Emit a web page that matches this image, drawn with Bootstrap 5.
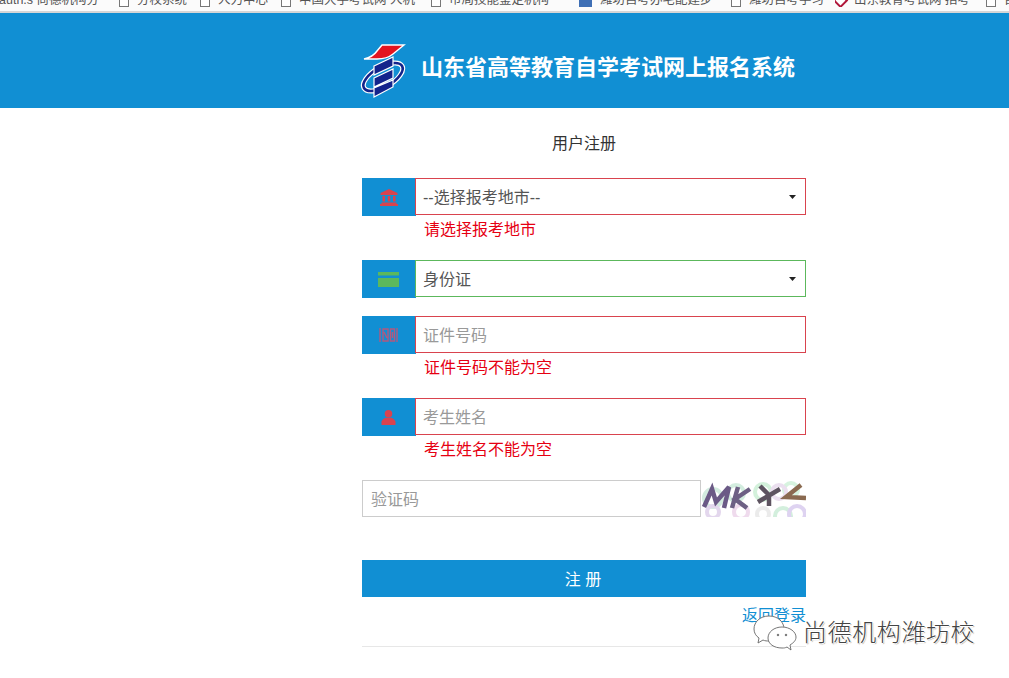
<!DOCTYPE html>
<html lang="zh">
<head>
<meta charset="utf-8">
<title>用户注册</title>
<link href="https://cdn.jsdelivr.net/npm/bootstrap@5.3.0/dist/css/bootstrap.min.css" rel="stylesheet">
<style>
html,body{height:678px;overflow:hidden}
body{font-family:"Liberation Sans","Noto Sans CJK SC",sans-serif;color:#333;background:#fff;font-size:14px}
.tabs-strip{height:13px;overflow:hidden;background:#fbfbfb;border-bottom:2px solid #d6d6d6;font-size:12.5px;line-height:14px;color:#555;white-space:nowrap}
.tab-item{display:flex;align-items:center;gap:8px;flex:none;height:14px;margin-top:-7px;overflow:hidden;width:81px}
.tab-item:nth-child(1){width:120px;margin-left:-1px}
.tab-item:nth-child(4){width:150px}
.tab-item:nth-child(5){width:148px}
.tab-item:nth-child(6){width:152px}
.tab-item:nth-child(7){width:104px}
.tab-item:nth-child(8){width:151px}
.tab-box{display:block;width:10px;height:14px;border:1px solid #777;background:#fff;flex:none}
.tab-fav{background:#3f6fb5;border-color:#3f6fb5;width:13px}
.tab-mark{width:11px;height:11px;background:#fff;border:2px solid #b0173a;transform:rotate(45deg);flex:none;display:block}
.brand-bar{height:95px;background:#118fd3}
.brand-inner{width:446px;margin-left:360px;height:95px;padding-top:29px}
.brand-logo{flex:none}
.brand-title{font-size:22px;font-weight:700;color:#fff;margin-left:15px;line-height:52px;white-space:nowrap}
.reg-form{width:444px;margin-left:362px}
.reg-heading{font-size:16px;line-height:20px;margin-top:26px;margin-bottom:24px;color:#333}
.addon-cell{width:54px;height:38px;background:#118fd3;border:0;border-radius:0;flex:none;display:flex;align-items:center;justify-content:center;padding-right:1px}
.reg-field.form-control,.reg-field.form-select{height:37px;border-radius:0;font-size:16px;padding:2px 8px 0 7px;color:#555;box-shadow:none}
.reg-field::placeholder{color:#999}
.reg-field.bad-state{border:1px solid #d9434e}
.reg-field.good-state{border:1px solid #5cb85c}
.reg-field.form-select{background-image:url("data:image/svg+xml,%3Csvg xmlns='http://www.w3.org/2000/svg' width='7' height='4'%3E%3Cpath d='M0 0H7L3.500 4Z' fill='%23222'/%3E%3C/svg%3E");background-size:7px 4px;background-position:right 9px top 16px;background-repeat:no-repeat}
.err-line{color:#e60012;font-size:16px;line-height:22px;margin:3px 0 19px 62px;height:22px}
.row-gap{margin-bottom:18px}
.code-input.form-control{width:339px;height:37px;border:1px solid #ccc;border-radius:0;font-size:16px;padding:2px 8px 0;flex:none}
.code-input::placeholder{color:#999}
.captcha-pic{width:105px;height:37px;flex:none}
.submit-btn.btn{height:37px;border-radius:0;background:#118fd3;border:0;color:#fff;font-size:16px;margin-top:43px;width:100%;padding:2px 2px 0 0}
.back-link{color:#118fd3;text-decoration:none;font-size:16px;line-height:22px;margin-top:8px}
.end-rule{border-top:1px solid #e7e7e7;margin-top:19px}
.wm-layer{position:absolute;left:753px;top:613px;gap:6px;pointer-events:none}
.wm-text{font-size:24px;line-height:40px;color:#444;text-shadow:1px 0 #fff,-1px 0 #fff,0 1px #fff,0 -1px #fff,1px 1px 1px #999;letter-spacing:.6px;font-weight:300}
</style>
</head>
<body>
<div class="tabs-strip d-flex">
 <span class="tab-item">auth.s 尚德机构分</span>
 <span class="tab-item"><i class="tab-box"></i>分校系统</span>
 <span class="tab-item"><i class="tab-box"></i>人力中心</span>
 <span class="tab-item"><i class="tab-box"></i>中国大学考试网 人机</span>
 <span class="tab-item"><i class="tab-box"></i>市局技能鉴定机构</span>
 <span class="tab-item"><i class="tab-box tab-fav"></i>潍坊自考办宅配建步</span>
 <span class="tab-item"><i class="tab-box"></i>潍坊自考学习</span>
 <span class="tab-item"><i class="tab-mark"></i>山东教育考试网 招考</span>
 <span class="tab-item"><i class="tab-box"></i>自考</span>
</div>
<header class="brand-bar">
 <div class="brand-inner d-flex align-items-start">
  <svg width="46" height="56" viewBox="0 0 46 56" class="brand-logo">
   <path d="M22 3 H44 L33 12 Q27 17 17 17 H4 Q13 15 17 9Z" fill="#e3141f" stroke="#fff" stroke-width="1.400"/>
   <ellipse cx="23" cy="35" rx="22" ry="10" transform="rotate(-30 23 35)" fill="none" stroke="#fff" stroke-width="5"/>
   <ellipse cx="23" cy="35" rx="22" ry="10" transform="rotate(-30 23 35)" fill="none" stroke="#13248c" stroke-width="2.600"/>
   <path d="M14 24 L33 15 V24 L14 33Z M14 36 L33 27 V36 L14 45Z M14 46 L33 38 V45 L14 55Z" fill="#13248c" stroke="#fff" stroke-width="1.200"/>
  </svg>
  <div class="brand-title">山东省高等教育自学考试网上报名系统</div>
 </div>
</header>
<main class="reg-form">
 <div class="reg-heading text-center">用户注册</div>
 <div class="input-group flex-nowrap">
  <span class="addon-cell"><svg width="18" height="17" viewBox="0 0 18 17"><path d="M9 0 L17.500 4 V6 H.5 V4Z M2.500 7H5V12.500H2.500Z M7.700 7H10.300V12.500H7.700Z M13 7H15.500V12.500H13Z M1.500 13.500H16.500V15H18V17H0V15H1.500Z" fill="#d9434e"/></svg></span>
  <select class="form-select reg-field bad-state"><option>--选择报考地市--</option></select>
 </div>
 <div class="err-line">请选择报考地市</div>
 <div class="input-group flex-nowrap row-gap">
  <span class="addon-cell"><svg width="21" height="15" viewBox="0 0 21 15"><path d="M0 0H21V3.500H0Z M0 6H21V15H0Z" fill="#5cb85c"/></svg></span>
  <select class="form-select reg-field good-state"><option>身份证</option></select>
 </div>
 <div class="input-group flex-nowrap">
  <span class="addon-cell"><svg width="19" height="14" viewBox="0 0 19 14" fill="none" stroke="#b2597f" stroke-width="1.400"><path d="M1 0V14 M4 1H9V13H4Z M11.500 1H15.500V13H11.500Z M18 0V14 M5 4L8 10 M13.500 4V10"/></svg></span>
  <input class="form-control reg-field bad-state" placeholder="证件号码">
 </div>
 <div class="err-line">证件号码不能为空</div>
 <div class="input-group flex-nowrap">
  <span class="addon-cell"><svg width="15" height="15" viewBox="0 0 15 15"><circle cx="7.500" cy="3.800" r="3.800" fill="#d9434e"/><path d="M4.500 7.800 H10.500 Q13.500 9 14.500 11.500 V15 H.5 V11.500 Q1.500 9 4.500 7.800Z" fill="#d9434e"/></svg></span>
  <input class="form-control reg-field bad-state" placeholder="考生姓名">
 </div>
 <div class="err-line">考生姓名不能为空</div>
 <div class="d-flex">
  <input class="form-control code-input" placeholder="验证码">
  <svg class="captcha-pic" viewBox="0 0 105 37">
   <g fill="none" stroke-width="4" opacity=".5">
    <circle cx="12" cy="18" r="9" stroke="#a9d8c0"/><circle cx="35" cy="13" r="8" stroke="#a9dcc0"/><circle cx="12" cy="32" r="6" stroke="#c9b0dc"/>
    <circle cx="40" cy="32" r="7" stroke="#e0b8dd"/><circle cx="62" cy="34" r="6" stroke="#d9d9d9"/><circle cx="62" cy="12" r="8" stroke="#a8e4b8"/>
    <circle cx="82" cy="36" r="8" stroke="#a8e0bc"/><circle cx="96" cy="34" r="8" stroke="#bfa8e4"/><circle cx="90" cy="10" r="7" stroke="#b0e8c0"/><circle cx="78" cy="12" r="7" stroke="#d8c0e0"/>
   </g>
   <g fill="none" stroke-width="4.500">
    <path d="M3 27L11 9L15 22L28 7L23 28" stroke="#6b5a86"/>
    <path d="M37 7L31 28 M49 9L34 19L46 28" stroke="#6d6084"/>
    <path d="M57 22L79 9 M59 6L68 15 M68 15V26" stroke="#5d5360"/>
    <path d="M100 5L85 17L105 18" stroke="#8a6a50"/>
   </g>
  </svg>
 </div>
 <button class="btn submit-btn" type="button">注 册</button>
 <div class="text-end"><a class="back-link d-inline-block" href="#">返回登录</a></div>
 <div class="end-rule"></div>
</main>
<div class="wm-layer d-flex align-items-center">
 <svg width="44" height="38" viewBox="0 0 44 38" fill="#fff" stroke="#666" stroke-width=".9">
  <path d="M16 2C7 2 1 8 1 15C1 19 3 22 6 24L5 29L10 26C12 27 14 27 16 27C24 27 31 22 31 15C31 8 25 2 16 2Z"/>
  <path d="M29 13C21 13 15 18 15 24C15 30 21 34 29 34C31 34 32 34 34 33L38 36L37 31C40 29 43 27 43 23C43 18 37 13 29 13Z"/>
  <circle cx="25" cy="21" r=".8" fill="#666"/><circle cx="33" cy="21" r=".8" fill="#666"/>
 </svg>
 <span class="wm-text">尚德机构潍坊校</span>
</div>
</body>
</html>
